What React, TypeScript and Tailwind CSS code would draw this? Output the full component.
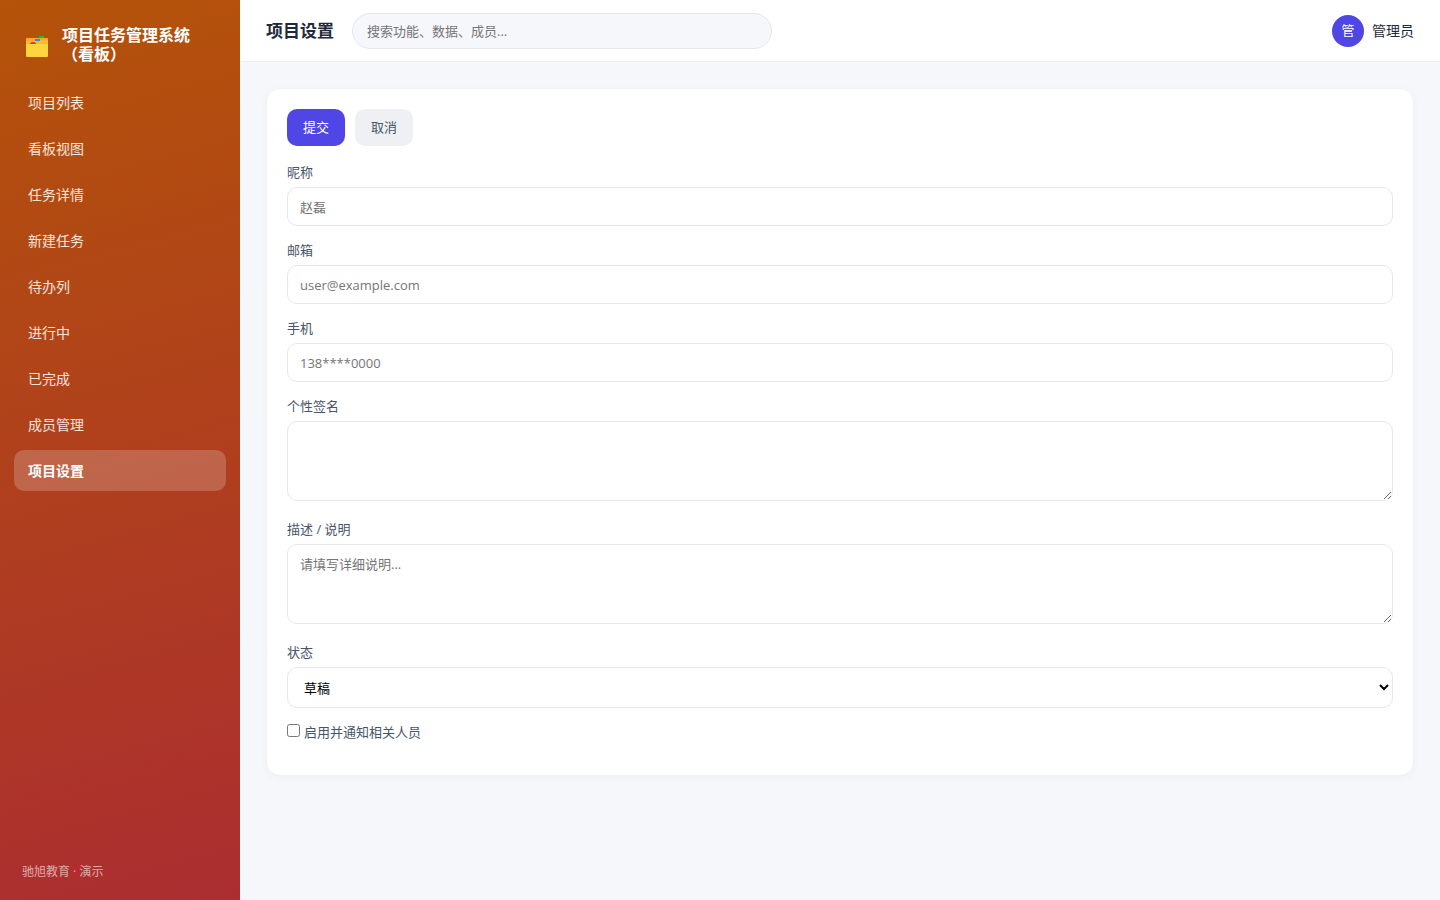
import type { ReactNode } from 'react';

const menu = [
  '项目列表',
  '看板视图',
  '任务详情',
  '新建任务',
  '待办列',
  '进行中',
  '已完成',
  '成员管理',
  '项目设置',
];

const control =
  'block w-full rounded-[10px] border border-[#e5e7eb] bg-white px-3 text-[13px] leading-5 outline-none placeholder:text-[#757575]';

function FolderIcon() {
  return (
    <svg className="w-[22px] h-[21px] mt-[3px] shrink-0" viewBox="0 0 22 21" aria-hidden="true">
      <rect x="13" y="0" width="5" height="3" fill="#00c853" />
      <path d="M0 3a1 1 0 0 1 1-1h20a1 1 0 0 1 1 1v6H0z" fill="#ffa726" />
      <path d="M0 5h13l1-1h7l1 1v4H0z" fill="#ffb938" />
      <rect x="13" y="0" width="5" height="2" fill="#00c853" />
      <rect x="9" y="3" width="5" height="2" fill="#0f9be8" />
      <path d="M0 8h22v12a1 1 0 0 1-1 1H1a1 1 0 0 1-1-1z" fill="#fdd63f" />
      <path d="M4 8V7h1V6h4v1h1v1z" fill="#f4372d" />
    </svg>
  );
}

function Field({ id, label, children }: { id: string; label: string; children: ReactNode }) {
  return (
    <div>
      <label htmlFor={id} className="block mb-1.5 text-[13px] leading-[18px] text-[#475569]">
        {label}
      </label>
      {children}
    </div>
  );
}

function Sidebar() {
  return (
    <aside className="w-60 shrink-0 flex flex-col px-3.5 pt-[26px] pb-[18px] text-white bg-[linear-gradient(165deg,#b45309,#ab2d31)]">
      <div className="flex items-center gap-3.5 pl-3 pr-5 mb-[18px]">
        <FolderIcon />
        <div className="text-base leading-[19px] font-bold">项目任务管理系统（看板）</div>
      </div>
      <nav className="flex flex-col gap-[5px]">
        {menu.map((item) => (
          <a
            key={item}
            href="#"
            className={
              item === '项目设置'
                ? 'h-[41px] flex items-center px-3.5 rounded-[10px] text-sm font-bold bg-white/20'
                : 'h-[41px] flex items-center px-3.5 rounded-[10px] text-sm text-white/85'
            }
          >
            {item}
          </a>
        ))}
      </nav>
      <div className="mt-auto pl-2 text-xs leading-5 text-white/60">驰旭教育 · 演示</div>
    </aside>
  );
}

function Topbar() {
  return (
    <header className="flex items-center gap-[18px] px-[26px] py-3 h-[62px] bg-white border-b border-[#eceef2]">
      <h1 className="text-[17px] font-bold text-[#1e293b]">项目设置</h1>
      <input
        type="search"
        aria-label="搜索"
        placeholder="搜索功能、数据、成员..."
        className="w-[420px] h-9 px-3.5 rounded-full border border-[#e5e7eb] bg-[#f5f7fb] text-[13px] outline-none placeholder:text-[#757575]"
      />
      <div className="ml-auto flex items-center gap-2">
        <div className="w-8 h-8 rounded-full bg-[#4f46e5] text-white text-[13px] flex items-center justify-center">
          管
        </div>
        <span className="text-sm text-[#1e293b]">管理员</span>
      </div>
    </header>
  );
}

export default function App() {
  return (
    <div className="min-h-screen flex bg-[#f5f7fb] font-['Open_Sans','Noto_Sans_CJK_SC',sans-serif]">
      <Sidebar />
      <div className="flex-1 min-w-0">
        <Topbar />
        <main className="p-[26px]">
          <form
            className="p-5 rounded-[14px] bg-white border border-[#f1f2f6] shadow-[0_2px_8px_rgba(15,23,42,0.03)]"
            onSubmit={(e) => e.preventDefault()}
          >
            <div className="flex gap-2.5 mb-[17px] text-[13px]">
              <button type="submit" className="h-[37px] px-4 rounded-[10px] bg-[#4f46e5] text-white">
                提交
              </button>
              <button type="button" className="h-[37px] px-4 rounded-[10px] bg-[#eef0f4] text-[#475569]">
                取消
              </button>
            </div>
            <div className="flex flex-col gap-[15px]">
              <Field id="nickname" label="昵称">
                <input id="nickname" type="text" placeholder="赵磊" className={`${control} h-[39px]`} />
              </Field>
              <Field id="email" label="邮箱">
                <input id="email" type="email" placeholder="user@example.com" className={`${control} h-[39px]`} />
              </Field>
              <Field id="phone" label="手机">
                <input id="phone" type="tel" placeholder="138****0000" className={`${control} h-[39px]`} />
              </Field>
              <Field id="signature" label="个性签名">
                <textarea id="signature" className={`${control} h-20 py-[9px] mb-1`} />
              </Field>
              <Field id="description" label="描述 / 说明">
                <textarea
                  id="description"
                  placeholder="请填写详细说明..."
                  className={`${control} h-20 py-[9px] mb-1`}
                />
              </Field>
              <Field id="status" label="状态">
                <select id="status" className={`${control} h-[41px] text-black`}>
                  <option>草稿</option>
                  <option>已发布</option>
                </select>
              </Field>
              <label className="flex items-start gap-1 mb-3.5 text-[13px] leading-[18px] text-[#475569]">
                <input type="checkbox" className="w-[13px] h-[13px] mt-px" />
                启用并通知相关人员
              </label>
            </div>
          </form>
        </main>
      </div>
    </div>
  );
}
